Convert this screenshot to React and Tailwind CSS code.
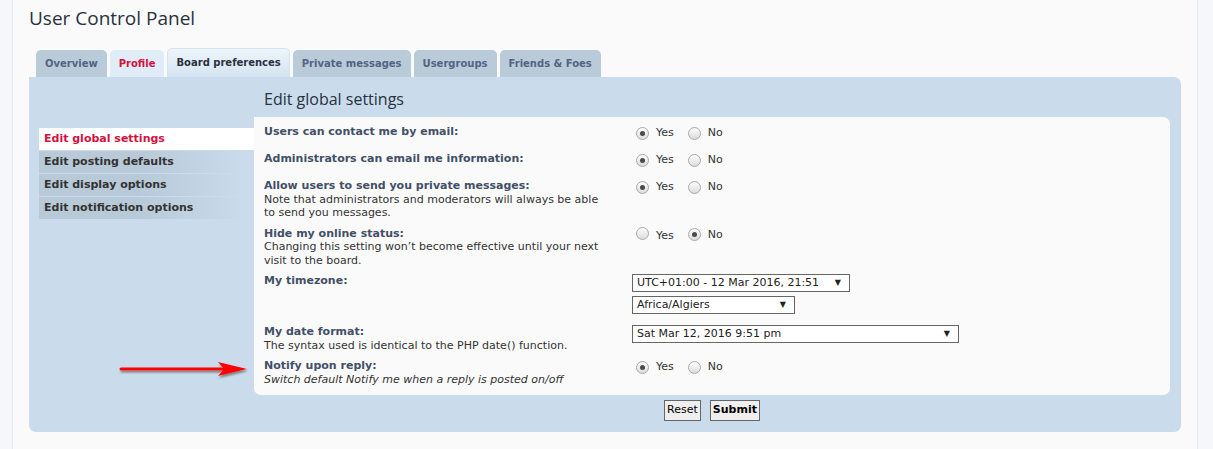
import React from "react";

const tabs = [
  { label: "Overview" },
  { label: "Profile", kind: "profile" },
  { label: "Board preferences", kind: "active" },
  { label: "Private messages" },
  { label: "Usergroups" },
  { label: "Friends & Foes" },
];

const menu = [
  { label: "Edit global settings", active: true },
  { label: "Edit posting defaults" },
  { label: "Edit display options" },
  { label: "Edit notification options" },
];

function Radio({ checked }) {
  return (
    <span className="relative inline-flex h-[13px] w-[13px] shrink-0 items-center justify-center rounded-full border border-[#a9a9a9] bg-gradient-to-b from-[#fdfdfd] to-[#dcdcdc]">
      {checked && <span className="h-[5px] w-[5px] rounded-full bg-[#4a4a4a]" />}
    </span>
  );
}

function YesNo({ yes }) {
  return (
    <div className="flex h-[20px] items-start">
      <label className="flex items-center">
        <span className="ml-[4px]"><Radio checked={yes} /></span>
        <span className="ml-[7px]">Yes</span>
      </label>
      <label className="ml-[14px] flex items-center">
        <Radio checked={!yes} />
        <span className="ml-[7px]">No</span>
      </label>
    </div>
  );
}

function Select({ value, w }) {
  return (
    <div
      className={`flex h-[18px] items-center justify-between border border-[#666] bg-white pl-[4px] pr-[8px] text-[11px] text-[#222] ${w}`}
    >
      <span>{value}</span>
      <span className="text-[8px]">▼</span>
    </div>
  );
}

function Row({ label, desc, italic, children }) {
  return (
    <div className="grid grid-cols-[368px_1fr]">
      <div className="leading-[13.5px]">
        <div className="font-bold text-[#425067]">{label}</div>
        {desc && <div className={italic ? "italic text-[#333]" : "text-[#333]"}>{desc}</div>}
      </div>
      <div>{children}</div>
    </div>
  );
}

export default function App() {
  return (
    <div
      className="relative flex min-h-[449px] bg-[#fafafa] text-[11px] text-[#333]"
      style={{ fontFamily: '"DejaVu Sans", Verdana, sans-serif' }}
    >
      <div className="w-[13px] shrink-0 border-r border-[#e6e9ee] bg-[#f5f7fa]" />
      <div className="flex-1 pl-[16px] pr-[15px]">
        <h1
          className="pt-[5px] text-[19px] leading-[26px] text-[#28313f]"
          style={{ fontFamily: '"Open Sans", "Liberation Sans", sans-serif' }}
        >
          User Control Panel
        </h1>

        <div className="mt-[17px] flex items-end gap-[3px] pl-[7px]">
          {tabs.map((t) => (
            <div
              key={t.label}
              className={
                t.kind === "active"
                  ? "flex h-[29px] items-center rounded-t-[5px] border border-b-0 border-[#d5e3f0] bg-gradient-to-b from-[#eef5fb] to-[#d5e4f1] px-[8px] pb-[2px] text-[10px] font-bold text-[#28313f]"
                  : t.kind === "profile"
                  ? "flex h-[27px] items-center rounded-t-[5px] bg-[#e0ecf7] px-[9px] text-[10px] font-bold text-[#d31141]"
                  : "flex h-[27px] items-center rounded-t-[5px] bg-[#b9cad9] px-[9px] text-[10px] font-bold text-[#536482]"
              }
            >
              {t.label}
            </div>
          ))}
        </div>

        <div className="w-[1152px] rounded-b-[7px] rounded-tr-[7px] bg-[#cadceb] pb-[11px] pl-[10px] pr-[11px]">
          <div className="flex">
            <div className="w-[215px] shrink-0 pt-[51px]">
              {menu.map((m) => (
                <div
                  key={m.label}
                  className={
                    m.active
                      ? "mb-[1px] flex h-[22px] items-center bg-white pl-[5px] font-bold text-[#d31141]"
                      : "mb-[1px] mr-[14px] flex h-[22px] items-center bg-gradient-to-r from-[#b8c9d8] via-[#b8c9d8] to-[#c9dbea] pl-[5px] font-bold text-[#333]"
                  }
                >
                  {m.label}
                </div>
              ))}
            </div>

            <div className="flex-1">
              <h2
                className="flex h-[40px] items-center pl-[10px] pt-[4px] text-[16px] text-[#28313f]"
                style={{ fontFamily: '"Open Sans", "Liberation Sans", sans-serif' }}
              >
                Edit global settings
              </h2>
              <div className="flex flex-col gap-[7px] rounded-[7px] rounded-tl-none rounded-bl-[7px] bg-[#fafafa] pb-[9px] pl-[10px] pt-[8px]">
                <Row label="Users can contact me by email:">
                  <YesNo yes />
                </Row>
                <Row label="Administrators can email me information:">
                  <YesNo yes />
                </Row>
                <Row
                  label="Allow users to send you private messages:"
                  desc={<>Note that administrators and moderators will always be able<br />to send you messages.</>}
                >
                  <YesNo yes />
                </Row>
                <Row
                  label="Hide my online status:"
                  desc={<>Changing this setting won’t become effective until your next<br />visit to the board.</>}
                >
                  <YesNo yes={false} />
                </Row>
                <Row label="My timezone:">
                  <div className="flex flex-col gap-[4px] pb-[4px]">
                    <Select value="UTC+01:00 - 12 Mar 2016, 21:51" w="w-[218px]" />
                    <Select value="Africa/Algiers" w="w-[163px]" />
                  </div>
                </Row>
                <Row
                  label="My date format:"
                  desc="The syntax used is identical to the PHP date() function."
                >
                  <Select value="Sat Mar 12, 2016 9:51 pm" w="w-[327px]" />
                </Row>
                <Row
                  label="Notify upon reply:"
                  desc="Switch default Notify me when a reply is posted on/off"
                  italic
                >
                  <YesNo yes />
                </Row>
              </div>
              <div className="flex justify-center gap-[9px] pt-[5px]">
                <button className="h-[21px] border border-[#666] bg-[#efefef] px-[2px] text-[11px] text-[#000]">
                  Reset
                </button>
                <button className="h-[21px] border border-[#666] bg-[#efefef] px-[2px] text-[11px] font-bold text-[#000]">
                  Submit
                </button>
              </div>
            </div>
          </div>
        </div>
      </div>
      <div className="w-[16px] shrink-0 border-l border-[#e6e9ee] bg-[#f5f7fa]" />

      <svg className="absolute left-[118px] top-[358px]" width="135" height="22" viewBox="0 0 135 22">
        <defs>
          <filter id="sh" x="-10%" y="-50%" width="120%" height="200%">
            <feDropShadow dx="1" dy="2" stdDeviation="1.2" floodColor="#555" floodOpacity="0.7" />
          </filter>
        </defs>
        <g filter="url(#sh)">
          <line x1="3" y1="11" x2="105" y2="11" stroke="#f00" strokeWidth="3" strokeLinecap="round" />
          <path d="M100 4 L129 11 L100 18 L106 11 Z" fill="#f00" />
        </g>
      </svg>
    </div>
  );
}
